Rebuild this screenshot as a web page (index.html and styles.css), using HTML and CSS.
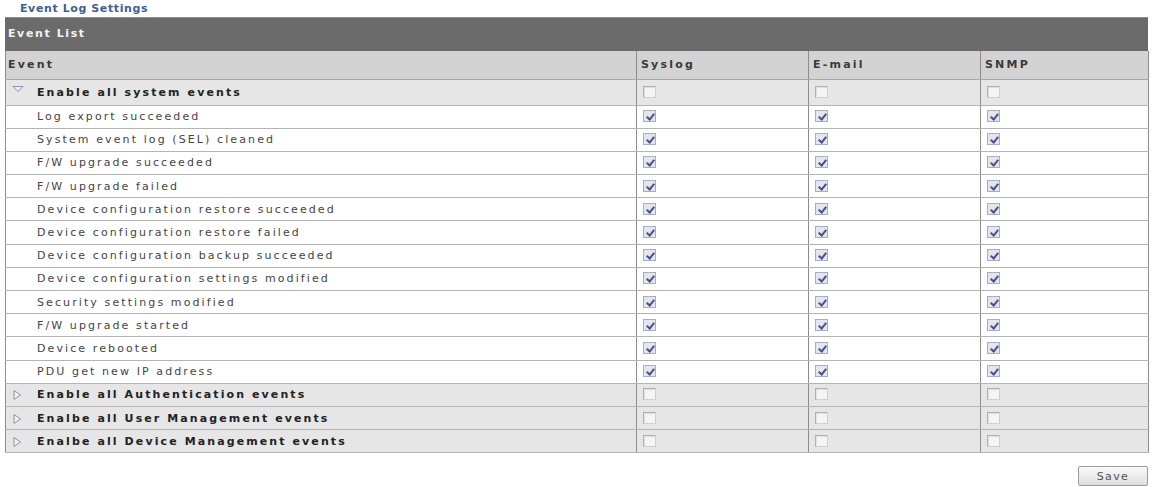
FILE: index.html
```html
<!DOCTYPE html>
<html lang="en">
<head>
<meta charset="utf-8">
<title>Event Log Settings</title>
<link rel="stylesheet" href="styles.css">
</head>
<body>
<div class="page">
  <div class="page-title">Event Log Settings</div>
  <div class="panel">
    <div class="panel-head">Event List</div>
    <table class="events">
      <colgroup>
        <col class="c-event"><col class="c-opt"><col class="c-opt"><col class="c-opt-last">
      </colgroup>
      <thead>
        <tr><th>Event</th><th>Syslog</th><th>E-mail</th><th>SNMP</th></tr>
      </thead>
      <tbody>
        <tr class="group first">
          <td><span class="tog open"><svg width="12" height="8" viewBox="0 0 12 8"><path d="M1 1.5 H11 L6 6.5 Z" fill="#eef0f6" stroke="#8a93a8" stroke-width="1"/></svg></span>Enable all system events</td>
          <td><span class="cb"></span></td><td><span class="cb"></span></td><td><span class="cb"></span></td>
        </tr>
        <tr class="item"><td>Log export succeeded</td><td><span class="cb on"></span></td><td><span class="cb on"></span></td><td><span class="cb on"></span></td></tr>
        <tr class="item"><td>System event log (SEL) cleaned</td><td><span class="cb on"></span></td><td><span class="cb on"></span></td><td><span class="cb on"></span></td></tr>
        <tr class="item"><td>F/W upgrade succeeded</td><td><span class="cb on"></span></td><td><span class="cb on"></span></td><td><span class="cb on"></span></td></tr>
        <tr class="item"><td>F/W upgrade failed</td><td><span class="cb on"></span></td><td><span class="cb on"></span></td><td><span class="cb on"></span></td></tr>
        <tr class="item"><td>Device configuration restore succeeded</td><td><span class="cb on"></span></td><td><span class="cb on"></span></td><td><span class="cb on"></span></td></tr>
        <tr class="item"><td>Device configuration restore failed</td><td><span class="cb on"></span></td><td><span class="cb on"></span></td><td><span class="cb on"></span></td></tr>
        <tr class="item"><td>Device configuration backup succeeded</td><td><span class="cb on"></span></td><td><span class="cb on"></span></td><td><span class="cb on"></span></td></tr>
        <tr class="item"><td>Device configuration settings modified</td><td><span class="cb on"></span></td><td><span class="cb on"></span></td><td><span class="cb on"></span></td></tr>
        <tr class="item"><td>Security settings modified</td><td><span class="cb on"></span></td><td><span class="cb on"></span></td><td><span class="cb on"></span></td></tr>
        <tr class="item"><td>F/W upgrade started</td><td><span class="cb on"></span></td><td><span class="cb on"></span></td><td><span class="cb on"></span></td></tr>
        <tr class="item"><td>Device rebooted</td><td><span class="cb on"></span></td><td><span class="cb on"></span></td><td><span class="cb on"></span></td></tr>
        <tr class="item"><td>PDU get new IP address</td><td><span class="cb on"></span></td><td><span class="cb on"></span></td><td><span class="cb on"></span></td></tr>
        <tr class="group">
          <td><span class="tog"><svg width="10" height="12" viewBox="0 0 10 12"><path d="M2 1.5 V10.5 L8.5 6 Z" fill="#eef0f6" stroke="#8a93a8" stroke-width="1"/></svg></span>Enable all Authentication events</td>
          <td><span class="cb"></span></td><td><span class="cb"></span></td><td><span class="cb"></span></td>
        </tr>
        <tr class="group">
          <td><span class="tog"><svg width="10" height="12" viewBox="0 0 10 12"><path d="M2 1.5 V10.5 L8.5 6 Z" fill="#eef0f6" stroke="#8a93a8" stroke-width="1"/></svg></span>Enalbe all User Management events</td>
          <td><span class="cb"></span></td><td><span class="cb"></span></td><td><span class="cb"></span></td>
        </tr>
        <tr class="group">
          <td><span class="tog"><svg width="10" height="12" viewBox="0 0 10 12"><path d="M2 1.5 V10.5 L8.5 6 Z" fill="#eef0f6" stroke="#8a93a8" stroke-width="1"/></svg></span>Enalbe all Device Management events</td>
          <td><span class="cb"></span></td><td><span class="cb"></span></td><td><span class="cb"></span></td>
        </tr>
      </tbody>
    </table>
  </div>
  <div class="actions">
    <button class="btn" type="button">Save</button>
  </div>
</div>
</body>
</html>
```

FILE: styles.css
```css
html, body {
  margin: 0;
  padding: 0;
  background: #ffffff;
}

.page {
  width: 1153px;
  font-family: "DejaVu Sans", Verdana, sans-serif;
  font-size: 11px;
  color: #3a3a3a;
}

.page-title {
  height: 17px;
  padding-left: 20px;
  line-height: 18px;
  font-size: 11px;
  font-weight: bold;
  letter-spacing: 0.6px;
  color: #3d5f92;
}

.panel {
  margin-left: 5px;
  width: 1143px;
}

.panel-head {
  height: 34px;
  line-height: 32px;
  padding-left: 3px;
  background: #6b6b6b;
  color: #f2f2f2;
  font-weight: bold;
  font-size: 11px;
  letter-spacing: 1.6px;
  border-top: 1px solid #8a8a8a;
  box-sizing: border-box;
}

.events {
  width: 1143px;
  border-collapse: collapse;
  table-layout: fixed;
  border-left: 1px solid #8c8c8c;
  border-right: 1px solid #8c8c8c;
  border-bottom: 1px solid #8c8c8c;
}

.c-event { width: 631px; }
.c-opt { width: 172px; }
.c-opt-last { width: 168px; }

.events th {
  height: 28px;
  padding: 0 0 0 4px;
  text-align: left;
  background: #d3d3d3;
  font-weight: bold;
  font-size: 11px;
  letter-spacing: 2.2px;
  color: #3a3a3a;
  border-left: 1px solid #8c8c8c;
  border-bottom: 1px solid #a8a8a8;
  box-sizing: border-box;
}

.events th:first-child {
  border-left: none;
  padding-left: 2px;
}

.events td {
  height: 23.2px;
  padding: 0 0 0 6px;
  border-left: 1px solid #8c8c8c;
  border-bottom: 1px solid #b4b4b4;
  vertical-align: middle;
  box-sizing: border-box;
}

.events td:first-child {
  border-left: none;
  padding-left: 31px;
  white-space: nowrap;
}

.item td {
  background: #ffffff;
  color: #444444;
  letter-spacing: 2.1px;
}

.group td {
  background: #e6e6e6;
  color: #222222;
  font-weight: bold;
  letter-spacing: 2.1px;
}

.group.first td {
  height: 26px;
}

.events .group td:first-child {
  padding-left: 6px;
}

.tog {
  display: inline-block;
  width: 25px;
  vertical-align: middle;
  line-height: 0;
  letter-spacing: 0;
}

.tog.open {
  position: relative;
  top: -4px;
}

.cb {
  display: inline-block;
  width: 13px;
  height: 12px;
  box-sizing: border-box;
  border: 1px solid #b0b0b0;
  border-right-color: #cfcfcf;
  border-bottom-color: #cfcfcf;
  background: #f4f4f4;
  box-shadow: inset 1px 1px 0 #e0e0e0;
  vertical-align: middle;
  position: relative;
  top: -1px;
}

.cb.on {
  border-color: #a9adc4;
  background: #e3e5ef;
  box-shadow: none;
}

.cb.on::after {
  content: "";
  position: absolute;
  left: 4px;
  top: 1px;
  width: 3px;
  height: 6px;
  border-right: 2px solid #4d4f86;
  border-bottom: 2px solid #4d4f86;
  transform: rotate(40deg);
}

.actions {
  display: flex;
  justify-content: flex-end;
  padding: 13px 5px 0 0;
}

.btn {
  width: 70px;
  height: 20px;
  padding: 0;
  border: 1px solid #9a9a9a;
  border-radius: 2px;
  background: linear-gradient(#fafafa, #dedede);
  font-family: "DejaVu Sans", Verdana, sans-serif;
  font-size: 11px;
  letter-spacing: 1.4px;
  color: #555555;
}
```
